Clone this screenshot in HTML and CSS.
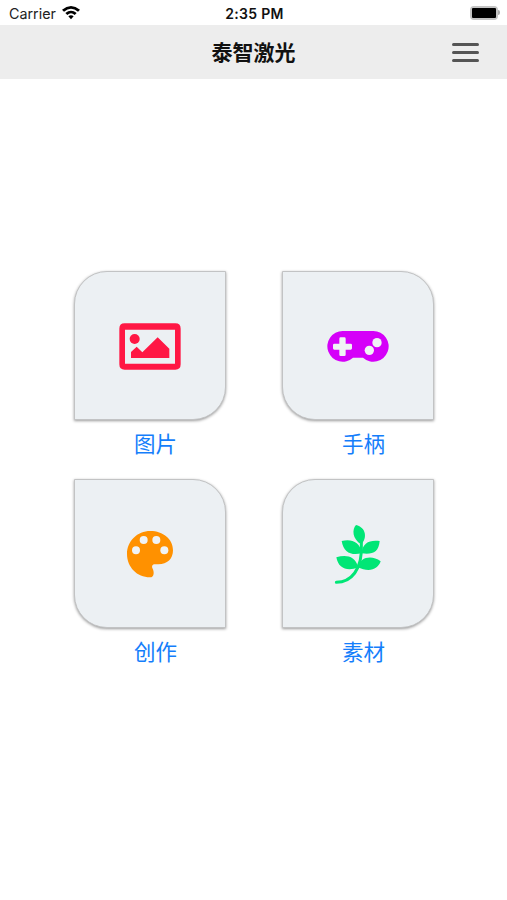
FILE: index.html
```html
<!DOCTYPE html>
<html lang="zh-CN">
<head>
<meta charset="utf-8">
<meta name="viewport" content="width=device-width, initial-scale=1">
<title>泰智激光</title>
<link rel="stylesheet" href="styles.css">
</head>
<body>
<div class="status">
  <div class="carrier"><span>Carrier</span>
    <svg class="wifi" viewBox="0 0 54 42"><path d="M0 11Q27-11 54 11L48 17Q27 0 6 17ZM10 21Q27 7 44 21L38 27Q27 17 16 27ZM19 31Q27 25 35 31L27 40Z"/></svg>
  </div>
  <time class="clock">2:35 PM</time>
  <div class="power"><div class="battery"><div class="charge"></div></div><div class="cap"></div></div>
</div>
<header class="nav">
  <h1 class="title">泰智激光</h1>
  <button class="menu" aria-label="菜单"><span></span><span></span><span></span></button>
</header>
<main class="grid">
  <a class="item">
    <div class="tile leaf">
      <svg class="icon red" viewBox="159 156 189 189"><path fill-rule="evenodd" d="M179 184H331Q347 184 347 200V307Q347 323 331 323H179Q163 323 163 307V200Q163 184 179 184ZM180 203V305H330V203Z"/><circle cx="209" cy="231" r="15"/><path d="M198 288V270L215 254L232 271L278 226L313 260V288Z"/></svg>
    </div>
    <span class="label">图片</span>
  </a>
  <a class="item">
    <div class="tile petal">
      <svg class="icon purple" viewBox="159 156 189 189"><path d="M209 207H301A46 46 0 1 1 270 287H240A46 46 0 1 1 209 207Z"/><path class="hole" d="M203 226H214Q218 226 218 230V245H233Q237 245 237 249V259Q237 263 233 263H218V278Q218 282 214 282H203Q199 282 199 278V263H184Q180 263 180 259V249Q180 245 184 245H199V230Q199 226 203 226Z"/><circle class="hole" cx="312" cy="242" r="14"/><circle class="hole" cx="289" cy="265" r="14"/></svg>
    </div>
    <span class="label">手柄</span>
  </a>
  <a class="item">
    <div class="tile petal">
      <svg class="icon orange" viewBox="159 156 189 189"><path d="M256 183C294 183 324 207 324 241C324 267 307 283 280 283H270C262 283 259 289 263 296C268 306 268 322 255 322C216 322 186 291 186 252C186 213 217 183 256 183Z"/><circle class="hole" cx="213" cy="241" r="12"/><circle class="hole" cx="236" cy="210" r="12"/><circle class="hole" cx="274" cy="210" r="12"/><circle class="hole" cx="298" cy="241" r="12"/></svg>
    </div>
    <span class="label">创作</span>
  </a>
  <a class="item">
    <div class="tile leaf">
      <svg class="icon green" viewBox="159 156 189 189"><path class="stem" d="M190 337C232 337 270 302 265 218"/><path d="M249 165C237 177 237 207 265 223C283 205 280 172 249 165ZM206 213C212 248 234 257 266 250C262 213 232 206 206 213ZM320 213C290 209 268 218 266 250C299 254 317 247 320 213ZM190 262C196 297 225 305 256 292C246 255 216 254 190 262ZM323 274C296 254 262 261 253 291C288 308 315 299 323 274Z"/></svg>
    </div>
    <span class="label">素材</span>
  </a>
</main>
</body>
</html>
```
FILE: styles.css
```css
* { box-sizing: border-box; }
body {
  margin: 0;
  min-height: 900px;
  background: #fff;
  font-family: Inter, "Noto Sans CJK SC", sans-serif;
}
.status {
  height: 25px;
  padding: 2px 7px 0 9px;
  display: grid;
  grid-template-columns: 1fr auto 1fr;
  align-items: center;
  font-size: 14.3px;
  line-height: 22px;
  color: #222;
}
.carrier { display: flex; align-items: center; gap: 6px; }
.wifi { width: 18px; height: 14px; margin-top: -2px; fill: #000; }
.clock { font-size: 14px; font-weight: 600; letter-spacing: .3px; color: #111; }
.power { display: flex; justify-content: flex-end; align-items: center; gap: 0; margin-top: -2px; }
.battery {
  width: 28px;
  height: 14px;
  padding: 0;
  border: 2px solid #c4c4c4;
  border-radius: 4px;
}
.charge { height: 100%; border-radius: 1px; background: #000; }
.cap { width: 2px; height: 5px; border-radius: 0 3px 3px 0; background: #aaa; }
.nav {
  height: 54px;
  padding: 0 28px;
  display: grid;
  grid-template-columns: 1fr auto 1fr;
  align-items: center;
  background: #ededed;
}
.title {
  grid-column: 2;
  margin: 0;
  padding-top: 2px;
  font-size: 21px;
  line-height: 30px;
  font-weight: 700;
  color: #111;
}
.menu {
  justify-self: end;
  width: 27px;
  padding: 0;
  border: 0;
  background: none;
  display: grid;
  gap: 5px;
}
.menu span { height: 3px; border-radius: 2px; background: #555; }
.grid {
  margin: 192px 0 0 74px;
  display: grid;
  grid-template-columns: repeat(2, 152px);
  grid-auto-rows: 208px;
  column-gap: 56px;
}
.tile {
  width: 152px;
  height: 149px;
  display: flex;
  align-items: center;
  justify-content: center;
  border: 1px solid #c2c3c4;
  background: #ecf0f3;
  box-shadow: 0 1px 3px rgba(0, 0, 0, .4);
}
.leaf { border-radius: 33px 0; }
.petal { border-radius: 0 33px; }
.icon { width: 63px; height: 63px; margin-right: 1px; }
.red { fill: #ff1744; }
.purple { fill: #d500f9; }
.orange { fill: #ff9100; }
.green { fill: #00e676; }
.hole { fill: #f0f3f5; }
.stem { fill: none; stroke: #00e676; stroke-width: 9; stroke-linecap: round; }
.label {
  display: block;
  width: 163px;
  margin-top: 8px;
  text-align: center;
  font-size: 21.5px;
  line-height: 33px;
  color: #147efb;
}
```
